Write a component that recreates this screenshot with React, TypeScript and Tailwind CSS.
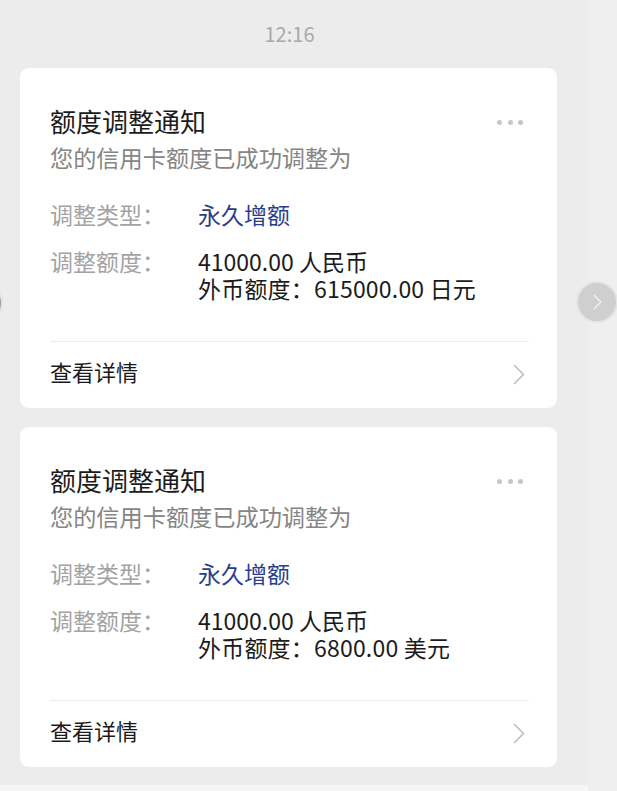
import React from 'react'

interface NoticeProps {
  amount: string
  foreign: string
}

const font = "font-['Noto_Sans_CJK_SC','Noto_Sans',sans-serif]"

const Dots = () => (
  <div className="mr-[6px] flex items-center gap-[5.5px] pt-[2px]">
    <span className="h-[5px] w-[5px] rounded-full bg-[#c6c6c6]" />
    <span className="h-[5px] w-[5px] rounded-full bg-[#c6c6c6]" />
    <span className="h-[5px] w-[5px] rounded-full bg-[#c6c6c6]" />
  </div>
)

const Chevron = ({ color = '#bdbdbd', w = 12, h = 21 }: { color?: string; w?: number; h?: number }) => (
  <svg width={w} height={h} viewBox="0 0 12 21" fill="none">
    <path d="M1.5 1.5 L10.5 10.5 L1.5 19.5" stroke={color} strokeWidth="1.6" strokeLinecap="round" strokeLinejoin="round" />
  </svg>
)

const NoticeCard = ({ amount, foreign }: NoticeProps) => {
  return (
    <div className="w-[537px] rounded-[9px] bg-white pl-[30px] pr-[28px] pt-[36px]">
      <div className="flex items-center justify-between">
        <h2 className="text-[26px] leading-[34px] text-[#1b1b1b]">额度调整通知</h2>
        <Dots />
      </div>
      <p className="mt-[3px] text-[23.2px] leading-[32px] text-[#858585]">您的信用卡额度已成功调整为</p>

      <div className="mt-[28px] flex text-[23px] leading-[27px]">
        <span className="w-[148px] text-[#a3a3a3]">调整类型：</span>
        <span className="text-[#2b3e8c]">永久增额</span>
      </div>
      <div className="mt-[20px] flex text-[23px] leading-[27px]">
        <span className="w-[148px] text-[#a3a3a3]">调整额度：</span>
        <div className="text-[#1b1b1b]">
          <div>{amount}</div>
          <div className="tracking-[0.2px]">{foreign}</div>
        </div>
      </div>

      <div className="mt-[39px] h-px bg-[#ececec]" />
      <div className="flex h-[66px] items-center justify-between pb-[7px]">
        <span className="text-[22px] text-[#1b1b1b]">查看详情</span>
        <div className="mr-[4px] pt-[5px]">
          <Chevron />
        </div>
      </div>
    </div>
  )
}

export default function App() {
  return (
    <div className={`relative flex h-[791px] w-[617px] overflow-hidden bg-[#efefef] ${font}`}>
      <div className="flex w-[588px] flex-col bg-[#ececec]">
        <div className="flex h-[68px] items-start justify-center pt-[20px] pr-[9px]">
          <span className="text-[20px] leading-[28px] text-[#a9a9a9]">12:16</span>
        </div>
        <div className="flex flex-col gap-[19px] pl-[20px]">
          <NoticeCard amount="41000.00 人民币" foreign="外币额度：615000.00 日元" />
          <NoticeCard amount="41000.00 人民币" foreign="外币额度：6800.00 美元" />
        </div>
        <div className="mt-auto h-[6px] bg-[#f5f5f5]" />
      </div>

      <div className="absolute left-[-37px] top-[283px] h-[40px] w-[40px] rounded-full border-2 border-[#e2e2e2] bg-[#9a9a9a]" />
      <div className="absolute left-[576px] top-[281px] flex h-[42px] w-[42px] items-center justify-center rounded-full border-2 border-[#e4e4e4] bg-[#cfcfcf]">
        <Chevron color="#f4f4f4" w={9} h={16} />
      </div>
    </div>
  )
}
